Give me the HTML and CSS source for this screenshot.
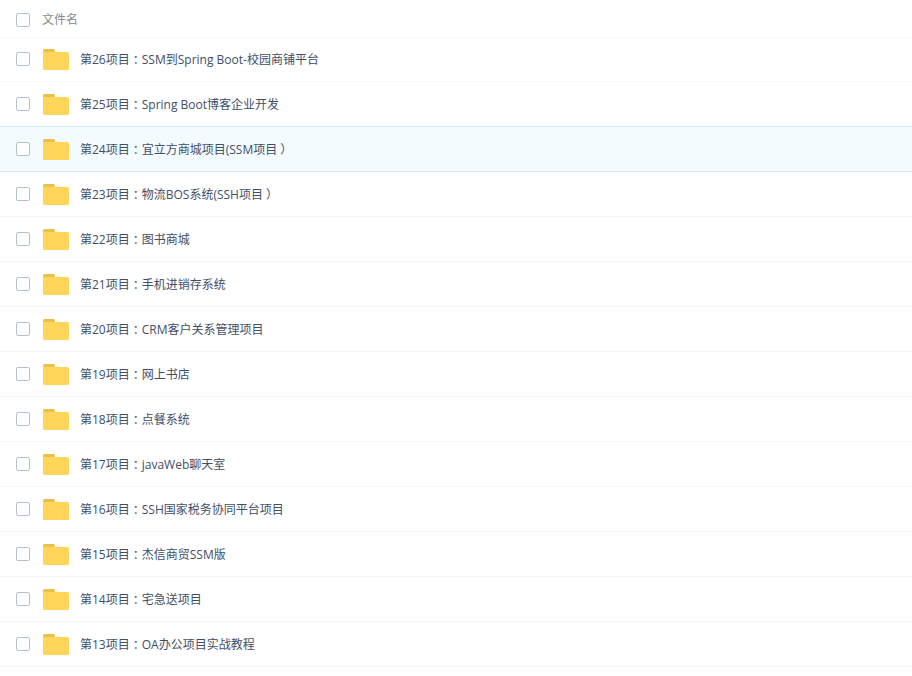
FILE: index.html
```html
<!DOCTYPE html>
<html lang="zh-CN">

<head>
    <meta charset="UTF-8">
    <meta name="viewport" content="width=device-width, initial-scale=1.0">
    <title>文件列表</title>
    <link rel="stylesheet" href="styles.css">
</head>

<body>
    <svg class="sprite" aria-hidden="true">
        <symbol id="folder" viewBox="0 0 26 21">
            <path fill="#ecc04c" d="M0 5V1.500Q0 0 1.500 0H10.500Q12 0 12 1.500V5Z" />
            <path fill="#ffd659" d="M0 3H24.500Q26 3 26 4.500V19.500Q26 21 24.500 21H1.500Q0 21 0 19.500Z" />
        </symbol>
    </svg>

    <table class="file-list">
        <thead>
            <tr>
                <th><label class="file"><input type="checkbox">文件名</label></th>
            </tr>
        </thead>
        <tbody id="files"></tbody>
    </table>

    <script src="files.js"></script>
</body>

</html>
```

FILE: styles.css
```css
body {
    margin: 0;
    background: #fff;
    font-family: "Open Sans", "Noto Sans CJK SC", sans-serif;
    font-size: 12px;
    line-height: 16px;
    color: #424e67;
}

.sprite {
    display: none;
}

.file-list {
    width: 100%;
    border-collapse: separate;
    border-spacing: 0;
}

th,
td {
    padding: 15px 16px;
    border-bottom: 1px solid #f2f6fd;
    text-align: left;
}

th {
    padding: 13px 16px 10px;
    border-color: #f7f7f7;
    font-weight: normal;
    color: #888;
}

tbody tr:first-child td {
    padding-top: 14px;
    border-color: #f7f7f7;
}

.before-active td,
.active td {
    border-color: #d4e8f9;
}

.active td {
    background: #f3fbff;
}

.file {
    display: flex;
    align-items: center;
    height: 14px;
    white-space: nowrap;
}

.file input {
    appearance: none;
    box-sizing: border-box;
    width: 14px;
    height: 14px;
    margin: 0 12px 0 0;
    border: 1px solid #b4c0d2;
    border-radius: 2px;
    background: #fff;
}

.file input:checked {
    background: #3b8cff;
}

td .file input {
    margin-right: 13px;
}

.folder {
    flex: none;
    width: 26px;
    height: 21px;
    margin-right: 11px;
}

/* half-width glyph in the middle of a full square */
.punct {
    padding: 0 3px;
    font-family: "Noto Sans CJK SC", sans-serif;
    font-feature-settings: "halt";
}
```

FILE: files.js
```js
const files = [
    { no: 26, name: 'SSM到Spring Boot-校园商铺平台' },
    { no: 25, name: 'Spring Boot博客企业开发', state: 'before-active' },
    { no: 24, name: '宜立方商城项目(SSM项目）', state: 'active' },
    { no: 23, name: '物流BOS系统(SSH项目）' },
    { no: 22, name: '图书商城' },
    { no: 21, name: '手机进销存系统' },
    { no: 20, name: 'CRM客户关系管理项目' },
    { no: 19, name: '网上书店' },
    { no: 18, name: '点餐系统' },
    { no: 17, name: 'javaWeb聊天室' },
    { no: 16, name: 'SSH国家税务协同平台项目' },
    { no: 15, name: '杰信商贸SSM版' },
    { no: 14, name: '宅急送项目' },
    { no: 13, name: 'OA办公项目实战教程' }
];

function title(file) {
    return `第${file.no}项目：${file.name}`.replace(/[：）]/g, '<span class="punct">$&</span>');
}

document.getElementById('files').innerHTML = files.map(file => `
    <tr class="${file.state || ''}">
        <td>
            <label class="file">
                <input type="checkbox">
                <svg class="folder" aria-hidden="true"><use href="#folder"></use></svg>
                <span>${title(file)}</span>
            </label>
        </td>
    </tr>
`).join('');
```
